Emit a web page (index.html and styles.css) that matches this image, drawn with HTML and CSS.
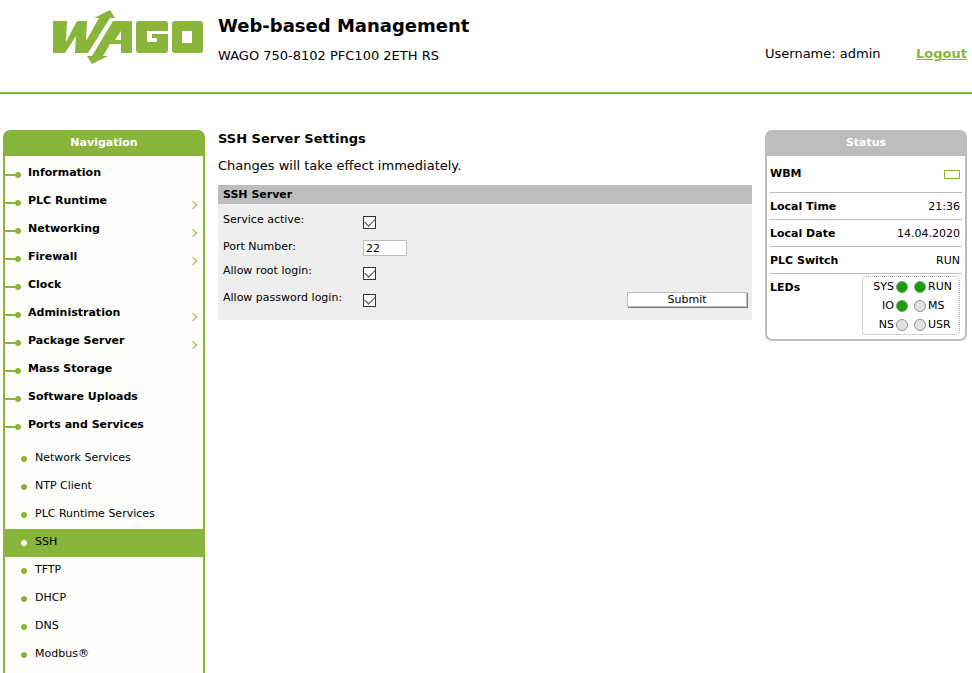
FILE: index.html
```html
<!DOCTYPE html>
<html lang="en">
<head>
<meta charset="utf-8">
<title>Web-based Management</title>
<link rel="stylesheet" href="styles.css">
</head>
<body>
<header class="page-header">
  <svg class="logo" viewBox="0 0 150 55" role="img" aria-label="WAGO">
    <g fill="#8ab53b">
      <path d="M0 12H14L13 33L24 12H34L33 32L46 9H41L57 1L62 9H57L35 44H22L23 27L12 44H0Z"/>
      <path fill-rule="evenodd" d="M60 12H79V44H68V35H57L50 47H55L39 55L34 47H39ZM68 22L62 31H68Z"/>
      <path d="M86 12H112Q115 12 115 15V22H94V33H104V29H99V25H115V41Q115 44 112 44H86Q83 44 83 41V15Q83 12 86 12Z"/>
      <path fill-rule="evenodd" d="M122 12H147Q150 12 150 15V41Q150 44 147 44H122Q119 44 119 41V15Q119 12 122 12ZM129 22V34H139V22Z"/>
    </g>
  </svg>
  <div class="titles">
    <h1>Web-based Management</h1>
    <p>WAGO 750-8102 PFC100 2ETH RS</p>
  </div>
  <div class="account">
    <span>Username: admin</span>
    <a href="#logout">Logout</a>
  </div>
</header>
<div class="columns">
  <nav class="navigation" aria-labelledby="nav-title">
    <h2 id="nav-title" class="panel-title">Navigation</h2>
    <ul class="menu">
      <li><a href="#information">Information</a></li>
      <li class="expandable"><a href="#plc-runtime">PLC Runtime</a></li>
      <li class="expandable"><a href="#networking">Networking</a></li>
      <li class="expandable"><a href="#firewall">Firewall</a></li>
      <li><a href="#clock">Clock</a></li>
      <li class="expandable"><a href="#administration">Administration</a></li>
      <li class="expandable"><a href="#package-server">Package Server</a></li>
      <li><a href="#mass-storage">Mass Storage</a></li>
      <li><a href="#software-uploads">Software Uploads</a></li>
      <li><a href="#ports">Ports and Services</a></li>
    </ul>
    <ul class="submenu">
      <li><a href="#network-services">Network Services</a></li>
      <li><a href="#ntp">NTP Client</a></li>
      <li><a href="#runtime-services">PLC Runtime Services</a></li>
      <li class="selected"><a href="#ssh" aria-current="page">SSH</a></li>
      <li><a href="#tftp">TFTP</a></li>
      <li><a href="#dhcp">DHCP</a></li>
      <li><a href="#dns">DNS</a></li>
      <li><a href="#modbus">Modbus®</a></li>
    </ul>
  </nav>
  <main class="content">
    <h2>SSH Server Settings</h2>
    <p>Changes will take effect immediately.</p>
    <form class="settings">
      <h3>SSH Server</h3>
      <div class="fields">
        <div class="field"><label for="active">Service active:</label><input id="active" type="checkbox" checked></div>
        <div class="field text-field"><label for="port">Port Number:</label><input id="port" type="text" value="22"></div>
        <div class="field"><label for="root">Allow root login:</label><input id="root" type="checkbox" checked></div>
        <div class="field"><label for="password">Allow password login:</label><input id="password" type="checkbox" checked><button type="button">Submit</button></div>
      </div>
    </form>
  </main>
  <aside class="status" aria-labelledby="status-title">
    <h2 id="status-title" class="panel-title">Status</h2>
    <dl>
      <div class="wbm"><dt>WBM</dt><dd><span class="activity"></span></dd></div>
      <div><dt>Local Time</dt><dd>21:36</dd></div>
      <div><dt>Local Date</dt><dd>14.04.2020</dd></div>
      <div><dt>PLC Switch</dt><dd>RUN</dd></div>
      <div class="led-row"><dt>LEDs</dt>
        <dd class="leds">
          <span>SYS</span><i class="led on"></i><i class="led on"></i><span>RUN</span>
          <span>IO</span><i class="led on"></i><i class="led"></i><span>MS</span>
          <span>NS</span><i class="led"></i><i class="led"></i><span>USR</span>
        </dd>
      </div>
    </dl>
  </aside>
</div>
</body>
</html>
```
FILE: styles.css
```css
* { box-sizing: border-box; }

body {
  --green: #8ab53b;
  --grey: #bdbdbd;
  display: flex;
  flex-direction: column;
  min-height: 100vh;
  margin: 0;
  background: #fff;
  color: #000;
  font: 11px/14px Verdana, "DejaVu Sans", sans-serif;
}

h1, h2, h3, p, ul, dl, dd { margin: 0; padding: 0; }
ul { list-style: none; }

.page-header {
  display: flex;
  height: 94px;
  padding: 9px 5px 0 53px;
  border-bottom: 2px solid var(--green);
}

.logo { width: 150px; height: 55px; }
.titles { flex: 1; margin-left: 15px; }
h1 { padding-top: 5px; font-size: 18px; line-height: 24px; }
.titles p { padding-top: 10px; font-size: 13px; line-height: 16px; }

.account {
  display: flex;
  justify-content: space-between;
  width: 202px;
  padding-top: 37px;
  font-size: 13px;
  line-height: 16px;
}
.account a { color: var(--green); font-weight: bold; }

.columns {
  display: grid;
  flex: 1;
  grid-template-columns: 202px 1fr 202px;
  gap: 13px;
  padding: 36px 5px 0 3px;
}

.panel-title {
  padding: 3px 0 5px;
  color: #fff;
  font-size: 11px;
  line-height: 16px;
  text-align: center;
}

.navigation {
  border: 2px solid var(--green);
  border-bottom: 0;
  border-radius: 7px 7px 0 0;
  background: #fdfefb;
}
.navigation .panel-title { background: var(--green); }

.menu { padding-top: 4px; }
.submenu { padding-top: 5px; }
.menu li, .submenu li { display: flex; position: relative; height: 28px; }
.menu a, .submenu a { flex: 1; padding-top: 6px; color: #000; text-decoration: none; }
.menu a { padding-left: 23px; font-weight: bold; }
.submenu a { padding-left: 30px; }

.menu li::before {
  position: absolute;
  top: 14px;
  left: 0;
  width: 12px;
  height: 2px;
  background: var(--green);
  content: "";
}
.menu a::before, .submenu a::before {
  position: absolute;
  top: 12px;
  left: 10px;
  width: 6px;
  height: 6px;
  border-radius: 3px;
  background: var(--green);
  content: "";
}
.submenu a::before { top: 11px; left: 16px; }

.expandable::after {
  position: absolute;
  top: 14px;
  right: 7px;
  width: 5px;
  height: 5px;
  border: solid var(--green);
  border-width: 1px 1px 0 0;
  transform: rotate(45deg);
  content: "";
}

.submenu .selected { background: var(--green); }
.submenu .selected a::before { background: #fff; }

.content { padding-top: 1px; }
.content h2 { font-size: 13px; line-height: 16px; }
.content > p { padding: 11px 0; font-size: 13px; line-height: 16px; }

.settings { background: #eee; }
.settings h3 { padding: 3px 5px 2px; background: var(--grey); font-size: 11px; line-height: 14px; }
.fields { padding: 5px 4px 6px 5px; }
.field { display: flex; height: 27px; padding-top: 4px; }
.text-field { height: 24px; }
.field label { width: 140px; }

input[type="checkbox"] {
  width: 13px;
  height: 13px;
  margin: 3px 0 0;
  appearance: none;
  border: 1px solid #333;
  background: #fff;
}
input[type="checkbox"]:checked::before {
  display: block;
  width: 9px;
  height: 5px;
  margin: 1px;
  border: solid #444;
  border-width: 0 0 1px 1px;
  transform: rotate(-45deg);
  content: "";
}
input[type="text"] {
  width: 44px;
  height: 16px;
  padding: 0 2px;
  border: 1px solid var(--grey);
  background: #fff;
  color: #000;
  font: inherit;
}
button {
  width: 120px;
  height: 15px;
  margin: 1px 1px 0 auto;
  padding: 0;
  border: 1px solid var(--grey);
  box-shadow: 1px 1px 0 #808080;
  background: #fff;
  color: #000;
  font: inherit;
  line-height: 13px;
}

.status {
  align-self: start;
  border: 2px solid var(--grey);
  border-radius: 7px;
}
.status .panel-title { background: var(--grey); }
dl { padding: 0 3px; }
dl > div {
  display: flex;
  justify-content: space-between;
  padding: 7px 2px 5px 0;
  border-bottom: 1px solid var(--grey);
}
dt { font-weight: bold; }
dl > .wbm { padding: 11px 2px 11px 0; }
.activity { display: block; width: 16px; height: 9px; margin-top: 3px; border: 1px solid var(--green); }
dl > .led-row { padding: 2px 2px 4px 0; border: 0; }
.led-row dt { padding-top: 5px; }

.leds {
  display: grid;
  grid-template-columns: 31px 14px 14px 1fr;
  column-gap: 2px;
  align-items: center;
  width: 98px;
  border: 1px dotted #aaa;
  border-radius: 4px;
  line-height: 19px;
}
.leds span:nth-child(4n + 1) { text-align: right; }
.leds .led:nth-child(4n + 3) { justify-self: end; }
.led { width: 12px; height: 12px; border: 1px solid #909090; border-radius: 50%; background: #e2e2e2; }
.led.on { background: #14a000; }
```
